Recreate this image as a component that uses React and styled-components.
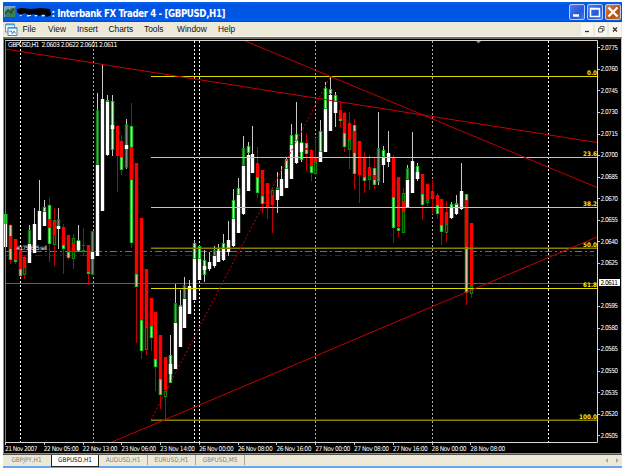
import React from "react";
import styled, { createGlobalStyle } from "styled-components";

const colors = {
  face: "#ece9d8",
  title: "#0054e3",
  red: "#ff0000",
  trend: "#c80000",
  yellow: "#dcdc00",
  olive: "#858000",
};

const GlobalStyle = createGlobalStyle`
  body {
    margin: 0;
    background: #ffffff;
    font-family: "Liberation Sans", Arial, sans-serif;
    overflow: hidden;
  }
`;

const Window = styled.div`
  display: flex;
  flex-direction: column;
  box-sizing: border-box;
  width: 619px;
  height: 466px;
  margin: 2px 3px 2px 3px;
  background: ${colors.face};
  border-bottom: 2px solid #6ba5ee;
`;

const TitleBar = styled.div`
  display: flex;
  align-items: center;
  flex: none;
  height: 20px;
  padding-left: 1px;
  background: linear-gradient(#0a62ec 0%, ${colors.title} 15%, #0055e5 75%, #0060f0 90%, #0045c8 100%);
`;

const TitleText = styled.div`
  flex: 1;
  white-space: pre;
  svg {
    display: block;
  }
`;

const CaptionButtons = styled.div`
  display: flex;
  gap: 2px;
  margin-right: 1px;
`;

const CaptionButton = styled.div`
  box-sizing: border-box;
  width: 16px;
  height: 16px;
  border: 1px solid #b9cdf5;
  border-radius: 2px;
  background: ${props => (props.$close ? "linear-gradient(135deg, #d88258, #b9500f 60%, #c86c20)" : "linear-gradient(135deg, #4b7df0, #2458da 60%, #3a7bf3)")};
  svg {
    display: block;
  }
`;

const MenuBar = styled.div`
  display: flex;
  align-items: center;
  flex: none;
  box-sizing: border-box;
  height: 15px;
  border-bottom: 1px solid #f6f5ee;
  padding-left: 2px;
`;

const MenuItem = styled.div`
  width: ${props => props.$width}px;
  font-size: 8.4px;
  line-height: 14px;
  color: #101010;
`;

const MenuIcon = styled.svg`
  width: 13px;
  height: 13px;
  margin-right: 4.5px;
`;

const ChildButtons = styled.div`
  display: flex;
  gap: 2px;
  margin-left: auto;
  margin-right: 1px;
`;

const ChildButton = styled.svg`
  width: 12px;
  height: 13px;
  background: #f7f6f0;
`;

const ChartFrame = styled.div`
  flex: none;
  box-sizing: border-box;
  height: 417px;
  border: 1px solid #8e8c80;
  border-top: 2px solid #716f64;
  border-right-color: #c9c6b8;
  background: #000000;
  overflow: hidden;
`;

const ChartSvg = styled.svg`
  display: block;
  font-family: "DejaVu Sans Condensed", "DejaVu Sans", sans-serif;
  font-size: 6.6px;
`;

const TabBar = styled.div`
  display: flex;
  flex: 1;
  align-items: stretch;
  border-top: 1px solid #555248;
  font-family: "DejaVu Sans Condensed", "DejaVu Sans", sans-serif;
  font-size: 6.4px;
  line-height: 10px;
  color: #85837a;
`;

const Tab = styled.div`
  box-sizing: border-box;
  width: ${props => props.$width}px;
  text-align: center;
  margin-bottom: ${props => (props.$active ? 0 : "2px")};
  border-right: 1px solid ${props => (props.$active ? "#222222" : props.$first ? "transparent" : "#aaa797")};
  border-left: ${props => (props.$active ? "1px solid #222222" : "none")};
  border-bottom: ${props => (props.$active ? "1px solid #222222" : "none")};
  background: ${props => (props.$active ? "#ffffff" : "transparent")};
  color: ${props => (props.$active ? "#101010" : "inherit")};
`;

const TabArrows = styled.svg`
  width: 20px;
  height: 10px;
  margin-left: auto;
`;

// [wickTop, wickBottom, ...[kind, top, bottom]]
// W rising body, R falling body, G/P overlap, D dark overlap, O green frame on red
const candles = [
  [211, 247, ["W", 214, 247], ["G", 214, 224]],
  [224, 264, ["P", 225, 260], ["R", 236, 249]],
  [239, 264, ["R", 239, 260], ["P", 260, 262]],
  [249, 277, ["R", 249, 269], ["P", 269, 276]],
  [256, 279, ["O", 257, 275], ["R", 258, 268]],
  [225, 263, ["D", 230, 244], ["W", 244, 263]],
  [208, 253, ["W", 224, 253]],
  [180, 240, ["W", 211, 240]],
  [200, 226, ["G", 207, 212], ["W", 212, 226]],
  [198, 262, ["P", 205, 244], ["R", 219, 228]],
  [208, 266, ["O", 220, 245], ["R", 221, 235]],
  [208, 249, ["D", 219, 229], ["W", 226, 229]],
  [224, 274, ["R", 227, 245], ["P", 245, 249]],
  [235, 260, ["R", 235, 252], ["P", 252, 258]],
  [234, 269, ["O", 238, 259], ["R", 243, 252]],
  [225, 252, ["G", 240, 252], ["W", 241, 250]],
  [228, 256, ["R", 245, 246], ["O", 250, 251]],
  [245, 285, ["R", 245, 272], ["P", 272, 274]],
  [231, 275, ["D", 231, 275], ["W", 252, 259]],
  [93, 255, ["D", 110, 165], ["W", 165, 256]],
  [64, 211, ["W", 99, 211]],
  [95, 156, ["W", 102, 155], ["G", 100, 102]],
  [95, 156, ["G", 101, 150], ["W", 125, 129]],
  [125, 192, ["R", 126, 156]],
  [135, 175, ["R", 141, 157], ["P", 157, 170]],
  [119, 169, ["D", 124, 168], ["W", 145, 149]],
  [103, 248, ["P", 126, 243], ["R", 147, 180]],
  [163, 343, ["R", 163, 274], ["P", 274, 287]],
  [218, 359, ["R", 218, 320], ["P", 320, 351]],
  [269, 355, ["R", 269, 327], ["O", 327, 350]],
  [298, 351, ["R", 298, 326], ["P", 326, 338]],
  [312, 391, ["R", 312, 359], ["P", 359, 367]],
  [335, 409, ["R", 335, 379], ["P", 379, 395]],
  [357, 420, ["R", 357, 390], ["O", 391, 397]],
  [335, 383, ["G", 355, 383], ["W", 364, 374]],
  [284, 369, ["D", 303, 323], ["W", 323, 369]],
  [290, 347, ["G", 305, 308], ["W", 307, 347]],
  [277, 328, ["D", 285, 299], ["W", 299, 328]],
  [280, 314, ["W", 286, 314]],
  [240, 300, ["G", 243, 259], ["W", 259, 300]],
  [245, 280, ["G", 246, 259], ["W", 259, 280]],
  [250, 282, ["G", 260, 275], ["W", 266, 270]],
  [252, 271, ["W", 262, 269]],
  [246, 268, ["D", 250, 256], ["W", 256, 266]],
  [244, 262, ["G", 248, 252], ["W", 251, 262]],
  [234, 261, ["G", 243, 249], ["W", 248, 260]],
  [221, 256, ["W", 240, 252]],
  [189, 247, ["G", 200, 219], ["W", 219, 246]],
  [178, 233, ["G", 188, 195], ["W", 195, 233]],
  [136, 215, ["D", 148, 166], ["W", 166, 214]],
  [142, 191, ["G", 146, 153], ["W", 155, 191]],
  [126, 173, ["W", 154, 173]],
  [147, 198, ["R", 163, 177], ["P", 177, 193]],
  [170, 213, ["R", 170, 196], ["P", 196, 204]],
  [183, 219, ["R", 183, 208]],
  [187, 233, ["O", 190, 196], ["R", 195, 205]],
  [172, 213, ["D", 187, 190], ["W", 190, 200]],
  [166, 196, ["W", 179, 196]],
  [158, 188, ["G", 159, 169], ["W", 169, 188]],
  [124, 179, ["G", 135, 145], ["W", 145, 179]],
  [102, 164, ["G", 134, 141], ["W", 141, 163]],
  [123, 162, ["G", 142, 160], ["W", 143, 152]],
  [134, 171, ["P", 143, 154], ["R", 148, 150]],
  [149, 181, ["R", 150, 166], ["P", 166, 173]],
  [138, 175, ["R", 157, 162], ["O", 162, 174]],
  [120, 162, ["G", 131, 152], ["W", 152, 162]],
  [82, 152, ["G", 88, 109], ["W", 109, 152]],
  [77, 131, ["G", 89, 94], ["W", 95, 131]],
  [92, 127, ["G", 95, 113], ["W", 102, 113]],
  [102, 127, ["R", 110, 119], ["P", 119, 121]],
  [112, 152, ["R", 113, 133], ["P", 133, 147]],
  [112, 169, ["R", 123, 140], ["O", 140, 150]],
  [119, 190, ["P", 125, 174], ["R", 131, 153]],
  [141, 203, ["R", 141, 175]],
  [152, 193, ["R", 158, 177], ["P", 177, 181]],
  [155, 190, ["R", 167, 175], ["O", 175, 180]],
  [157, 189, ["P", 168, 185], ["R", 175, 180]],
  [112, 185, ["D", 148, 182]],
  [146, 183, ["G", 150, 157], ["W", 157, 165]],
  [131, 167, ["W", 153, 162]],
  [155, 243, ["R", 157, 197], ["P", 197, 228]],
  [177, 237, ["R", 177, 227], ["P", 228, 231]],
  [188, 233, ["O", 193, 233], ["R", 201, 212]],
  [165, 207, ["D", 168, 180], ["W", 180, 207]],
  [132, 193, ["W", 161, 193]],
  [163, 181, ["G", 166, 179], ["W", 172, 179]],
  [174, 220, ["R", 174, 194], ["P", 194, 205]],
  [184, 206, ["R", 184, 200], ["O", 200, 203]],
  [180, 214, ["R", 191, 199]],
  [193, 218, ["R", 195, 205], ["P", 205, 214]],
  [199, 245, ["R", 199, 225], ["P", 225, 232]],
  [201, 242, ["R", 212, 224], ["O", 224, 233]],
  [202, 219, ["G", 204, 218], ["W", 207, 218]],
  [195, 215, ["W", 204, 214], ["G", 203, 205]],
  [163, 210, ["W", 191, 209]],
  [194, 305, ["P", 194, 293], ["R", 200, 247]],
  [223, 298, ["R", 223, 286], ["O", 286, 294]],
];

const levels = [
  ["0.0", 76, 1],
  ["23.6", 157, 1],
  ["38.2", 207, 1],
  ["50.0", 247.5, 1.5],
  ["61.8", 288, 1],
  ["100.0", 419.5, 1.5],
];

const times = [
  "21 Nov 2007", "22 Nov 05:00", "22 Nov 13:00", "23 Nov 06:00", "23 Nov 14:00",
  "26 Nov 00:00", "26 Nov 08:00", "26 Nov 16:00", "27 Nov 00:00", "27 Nov 08:00",
  "27 Nov 16:00", "28 Nov 00:00", "28 Nov 08:00",
];

const separators = [[20, 1], [93, 0], [194, 1], [199, 1], [315, 0], [432, 0], [548, 1]];

const outline = { G: "#16c422", P: "#16c422", D: "#087d0c", O: "#078c07" };
const inner = { G: "#d3ffd4", P: "#efb5ae", D: "#858585", O: "#3b1000" };

function Segment({ x, kind, top, bottom }) {
  const height = Math.max(1, bottom - top);
  if (kind === "W" || kind === "R") {
    return <rect x={x - 1.2} y={top} width="3.4" height={height} fill={kind === "W" ? "#ffffff" : colors.red} />;
  }
  return (
    <g>
      <rect x={x - 1.2} y={top} width="3.4" height={height} fill={outline[kind]} />
      {height > 2 && <rect x={x - 0.1} y={top + 1} width="1.2" height={height - 2} fill={inner[kind]} />}
    </g>
  );
}

function Candle({ index, data }) {
  const [top, bottom, ...segments] = data;
  const x = Math.floor(5.6 + 4.848 * index);
  const falling = segments.some(s => s[0] === "R");
  return (
    <g>
      <rect x={x} y={top} width="1" height={bottom - top} fill={falling ? "#bd0000" : "#c9c9c9"} />
      {segments.map(([kind, a, b], i) => (
        <Segment key={i} x={x} kind={kind} top={a} bottom={b} />
      ))}
    </g>
  );
}

function Chart() {
  const prices = Array.from({ length: 19 }, (_, i) => (2.0775 - i * 0.0015).toFixed(4));
  return (
    <ChartSvg width="617" height="414" viewBox="4 39 617 414">
      {separators.map(([x, bright]) => (
        <path key={x} d={`M${x + 0.5} 41V442`} stroke={bright ? "#ffffff" : "#aaaaaa"} strokeDasharray="2 2" />
      ))}
      <path d="M5 283.5H597" stroke="#596168" />
      <path d="M5 251.5H594" stroke="#26a526" strokeDasharray="7 3 2 3" />
      <path d="M5 255.5H594" stroke="#850000" strokeDasharray="7 3 2 3" />
      {candles.map((data, i) => <Candle key={i} index={i} data={data} />)}
      {levels.map(([label, y, thick]) => (
        <g key={label}>
          <rect x="151" y={y} width="446" height={thick} fill={thick > 1 ? colors.olive : colors.yellow} />
          <text x="597" y={y - 0.7} textAnchor="end" fill="#eeee00" fontWeight="bold" fontSize="6.3">{label}</text>
        </g>
      ))}
      <g fill="none" stroke={colors.trend} strokeWidth="1">
        <path d="M5 49L597 142.5" />
        <path d="M243 40L597 187.5" />
        <path d="M112 442L597 237" />
        <path d="M151 420L330 77" strokeDasharray="2 2" />
      </g>
      <text x="16" y="250" fill="#dce6ef" fontSize="6" textLength="31">#1753625 sell</text>
      <path d="M475 40H482L478.5 43.5Z" fill="#7888a0" />

      <path d="M5.5 442V40.5H597.5V442.5H5" fill="none" stroke="#d8d8d8" />
      <path d="M5.5 41V442" stroke="#777777" />
      <text x="8" y="47.2" fill="#ffffff" fontSize="6.8" textLength="109.5" xmlSpace="preserve">GBPUSD,H1  2.0603 2.0622 2.0601 2.0611</text>

      {prices.map((price, i) => {
        const y = 47.3 + i * 21.56;
        if (i === 11) return null;
        return (
          <g key={price}>
            <rect x="598" y={Math.round(y)} width="2" height="1" fill="#cccccc" />
            <text x="600.6" y={y + 2.3} fill="#ffffff" textLength="17.5">{price}</text>
          </g>
        );
      })}
      <rect x="599" y="279" width="21" height="7" fill="#ffffff" />
      <text x="600.6" y="285" fill="#000000" textLength="17.5">2.0611</text>

      {times.map((time, i) => {
        const x = 5 + i * 38.78;
        return (
          <g key={time}>
            <rect x={Math.round(x)} y="443" width="1" height="2" fill="#cccccc" />
            <text x={x} y="451.2" fill="#ffffff" textLength={i === 0 ? 32.5 : 35}>{time}</text>
          </g>
        );
      })}
    </ChartSvg>
  );
}

function Title() {
  return (
    <TitleText>
      <svg width="300" height="20" viewBox="4 2 300 20">
        <rect x="4.5" y="7" width="11" height="10" fill="#3d8057" />
        <path d="M5 7H15V9L11 8L8 12L5 10Z" fill="#74a89a" />
        <path d="M5 14L8 10L11 13L14 8" fill="none" stroke="#194e3a" strokeWidth="1.5" />
        <path d="M4.5 17V6.500H15.500" fill="none" stroke="#a9c6ce" strokeWidth=".7" />
        <path d="M20 16L23 13M27 16L31 15M35 16L39 14M42 16L45 15" stroke="#e8efff" strokeWidth="1.5" />
        <path d="M17 9L21 8L31 9L41 8L50 9L51 15L47 17L43 14L39 16L34 14L29 15L25 13L21 15L17 12Z" fill="#000000" />
        <text x="51.5" y="16.500" fill="#ffffff" fontWeight="bold" fontFamily="DejaVu Sans Condensed, sans-serif" fontSize="9.6" textLength="174">: Interbank FX Trader 4 - [GBPUSD,H1]</text>
      </svg>
    </TitleText>
  );
}

function App() {
  return (
    <>
      <GlobalStyle />
      <Window>
        <TitleBar>
          <Title />
          <CaptionButtons>
            <CaptionButton>
              <svg width="14" height="14"><path d="M3 10.500H9" stroke="#ffffff" strokeWidth="2.500" /></svg>
            </CaptionButton>
            <CaptionButton>
              <svg width="14" height="14"><path d="M2.500 3.500H11.500V11.500H2.500ZM2.500 4H11.500" fill="none" stroke="#ffffff" strokeWidth="1.500" /></svg>
            </CaptionButton>
            <CaptionButton $close>
              <svg width="14" height="14"><path d="M2.500 2.500L11.500 11.500M11.500 2.500L2.500 11.500" stroke="#ffffff" strokeWidth="2.300" /></svg>
            </CaptionButton>
          </CaptionButtons>
        </TitleBar>
        <MenuBar>
          <MenuIcon viewBox="0 0 13 13">
            <path d="M.5 1H9.500V9H.5Z" fill="#e8f4fb" stroke="#5a9bc9" />
            <path d="M3 4.500H12V12.500H3Z" fill="#f5fbff" stroke="#3f87bf" />
            <path d="M.5 1.500H9.500M3 5H12" stroke="#4f98d0" strokeWidth="1.500" />
            <path d="M4.500 9L6 7.500L7.500 11L9 8L10.500 10.500" fill="none" stroke="#3f87bf" />
          </MenuIcon>
          <MenuItem $width={25.5}>File</MenuItem>
          <MenuItem $width={29}>View</MenuItem>
          <MenuItem $width={31.5}>Insert</MenuItem>
          <MenuItem $width={35.5}>Charts</MenuItem>
          <MenuItem $width={33}>Tools</MenuItem>
          <MenuItem $width={41}>Window</MenuItem>
          <MenuItem $width={22}>Help</MenuItem>
          <ChildButtons>
            <ChildButton viewBox="0 0 12 13"><path d="M4 8.500H8" stroke="#333333" strokeWidth="1.300" /></ChildButton>
            <ChildButton viewBox="0 0 12 13">
              <path d="M5 6V3.500H9V7.500H7.500M3.500 5.500H7.500V9H3.500Z" fill="none" stroke="#555555" strokeWidth=".9" />
            </ChildButton>
            <ChildButton viewBox="0 0 12 13"><path d="M4 4.500L8 8.500M8 4.500L4 8.500" stroke="#333333" strokeWidth="1.300" /></ChildButton>
          </ChildButtons>
        </MenuBar>
        <ChartFrame>
          <Chart />
        </ChartFrame>
        <TabBar>
          <Tab $width={48} $first>GBPJPY,H1</Tab>
          <Tab $width={48} $active>GBPUSD,H1</Tab>
          <Tab $width={49}>AUDUSD,H1</Tab>
          <Tab $width={48}>EURUSD,H1</Tab>
          <Tab $width={49}>GBPUSD,M5</Tab>
          <TabArrows viewBox="0 0 20 10">
            <path d="M6 3V8L3.500 5.500ZM14 3V8L16.500 5.500Z" fill="#aaa797" />
          </TabArrows>
        </TabBar>
      </Window>
    </>
  );
}

export default App;
